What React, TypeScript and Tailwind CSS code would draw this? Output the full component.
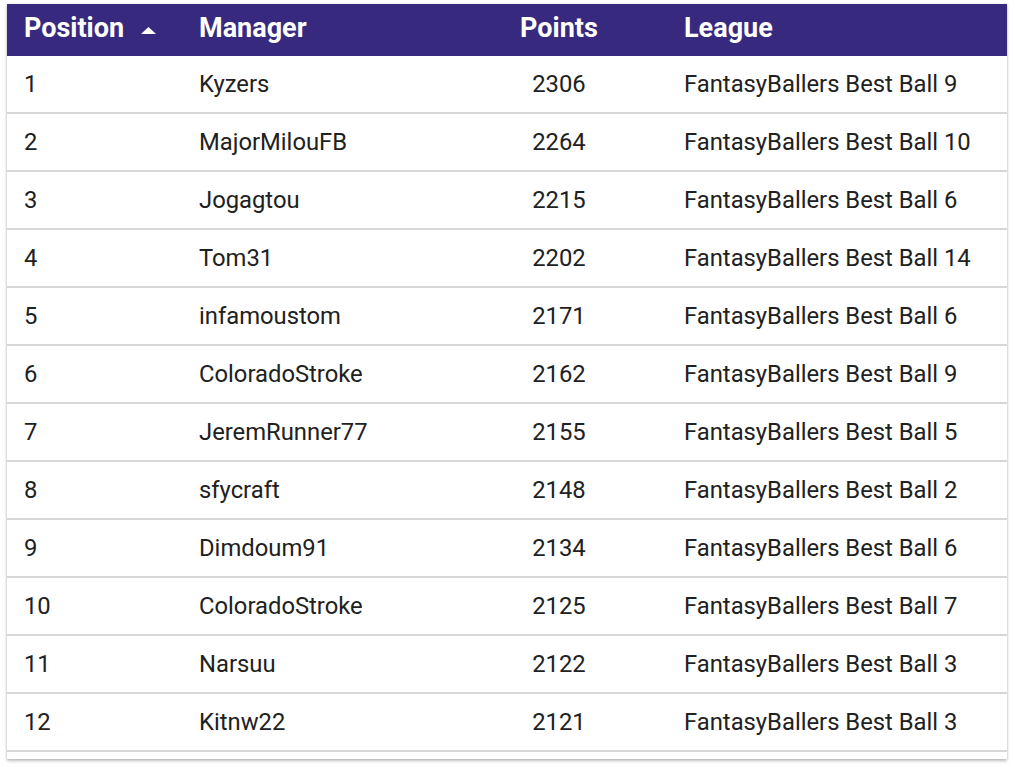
import React from "react";

const rows: [number, string, number, string][] = [
  [1, "Kyzers", 2306, "FantasyBallers Best Ball 9"],
  [2, "MajorMilouFB", 2264, "FantasyBallers Best Ball 10"],
  [3, "Jogagtou", 2215, "FantasyBallers Best Ball 6"],
  [4, "Tom31", 2202, "FantasyBallers Best Ball 14"],
  [5, "infamoustom", 2171, "FantasyBallers Best Ball 6"],
  [6, "ColoradoStroke", 2162, "FantasyBallers Best Ball 9"],
  [7, "JeremRunner77", 2155, "FantasyBallers Best Ball 5"],
  [8, "sfycraft", 2148, "FantasyBallers Best Ball 2"],
  [9, "Dimdoum91", 2134, "FantasyBallers Best Ball 6"],
  [10, "ColoradoStroke", 2125, "FantasyBallers Best Ball 7"],
  [11, "Narsuu", 2122, "FantasyBallers Best Ball 3"],
  [12, "Kitnw22", 2121, "FantasyBallers Best Ball 3"],
];

export default function App() {
  return (
    <div
      className="min-h-[767px] w-[1015px] bg-white pt-[4px] pl-[7px]"
      style={{ fontFamily: "Roboto, 'Liberation Sans', sans-serif" }}
    >
      <div className="w-[1000px] bg-white shadow-[0_2px_3px_rgba(0,0,0,0.25),0_0_2px_rgba(0,0,0,0.12)]">
        <div className="flex h-[52px] items-center bg-[#372a7e] pb-[4px] text-[27px] font-bold text-white">
          <div className="flex w-[175px] items-center pl-[17px]">
            <span>Position</span>
            <svg width="15" height="7" viewBox="0 0 15 7" className="ml-[17px] mt-[5px]">
              <polygon points="0,7 7.5,0 15,7" fill="white" />
            </svg>
          </div>
          <div className="w-[269px] pl-[17px]">Manager</div>
          <div className="w-[216px] text-center">Points</div>
          <div className="flex-1 pl-[17px]">League</div>
        </div>
        {rows.map(([pos, mgr, pts, league]) => (
          <div
            key={pos}
            className="flex h-[58px] items-center border-b-2 border-[#d7d7d7] pt-[1px] text-[23.8px] text-[#212121]"
          >
            <div className="w-[175px] pl-[17px]">{pos}</div>
            <div className="w-[269px] pl-[17px]">{mgr}</div>
            <div className="w-[216px] text-center">{pts}</div>
            <div className="flex-1 pl-[17px]">{league}</div>
          </div>
        ))}
        <div className="h-[7px]" />
      </div>
    </div>
  );
}
